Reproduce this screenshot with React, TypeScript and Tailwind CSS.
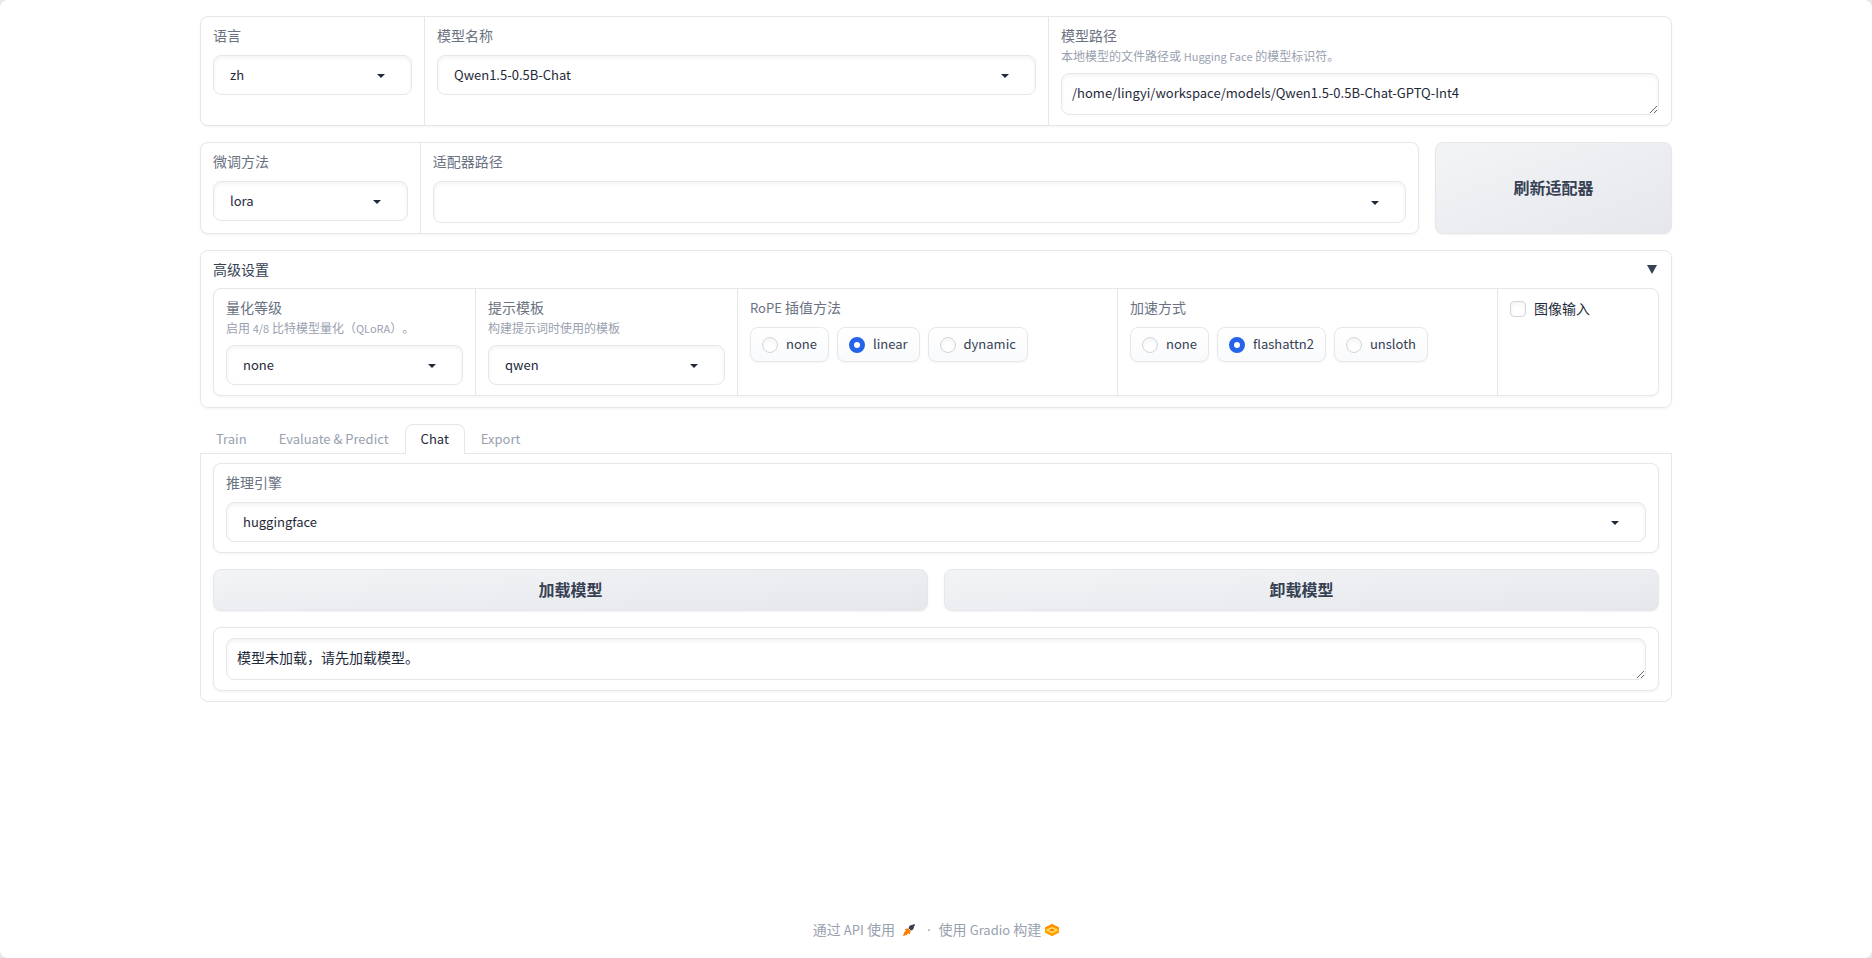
import { useId, useState, type ReactNode } from "react";

const BLOCK = "bg-white px-3 py-[10px]";
const FORM =
  "grid gap-px overflow-hidden rounded-lg border border-gray-200 bg-gray-200 shadow-[0_1px_3px_0_rgba(0,0,0,0.05)]";
const FIELD =
  "block w-full rounded-lg border border-gray-200 bg-white text-gray-800 shadow-[inset_0_2px_4px_0_rgba(0,0,0,0.05)] outline-none";
const TEXTAREA = "h-[42px] resize-y px-[10px]";
const BUTTON =
  "rounded-lg border border-gray-200 bg-linear-to-br from-gray-100 to-gray-200 pb-[2px] text-base font-semibold text-gray-700 shadow-[0_1px_2px_0_rgba(0,0,0,0.05)]";

type LabelProps = { id: string; text: string; info?: ReactNode };

function Label({ id, text, info }: LabelProps) {
  return (
    <label htmlFor={id} className="mb-2 block text-gray-500">
      <span className="block pb-1 leading-4">{text}</span>
      {info && (
        <span className="block h-[18px] py-px text-xs leading-4 text-gray-400">
          {info}
        </span>
      )}
    </label>
  );
}

type DropdownProps = {
  label: string;
  info?: ReactNode;
  options: string[];
  tall?: boolean;
};

function Dropdown({ label, info, options, tall }: DropdownProps) {
  const id = useId();
  return (
    <div className={BLOCK}>
      <Label id={id} text={label} info={info} />
      <div className="relative">
        <select
          id={id}
          className={`${FIELD} appearance-none px-4 text-[13px] ${tall ? "h-[42px]" : "h-10"}`}
        >
          {options.map((o) => (
            <option key={o}>{o}</option>
          ))}
        </select>
        <svg
          viewBox="0 0 18 18"
          className="pointer-events-none absolute inset-y-0 right-[22px] my-auto h-[18px] w-[18px] fill-gray-800"
        >
          <path d="M5 8l4 4 4-4z" />
        </svg>
      </div>
    </div>
  );
}

type RadioGroupProps = {
  label: ReactNode;
  options: string[];
  initial: string;
};

function RadioGroup({ label, options, initial }: RadioGroupProps) {
  const name = useId();
  const [value, setValue] = useState(initial);
  return (
    <fieldset className={BLOCK}>
      <legend className="float-left mb-2 h-5 w-full leading-4 text-gray-500">
        {label}
      </legend>
      <div className="clear-both flex flex-wrap gap-2">
        {options.map((o) => (
          <label
            key={o}
            className="flex h-[35px] items-center gap-2 rounded-lg border border-gray-200 bg-linear-to-b from-white to-gray-50 px-[11px] text-[13px] text-gray-700 shadow-[0_1px_2px_0_rgba(0,0,0,0.05)]"
          >
            <input
              type="radio"
              name={name}
              checked={value === o}
              onChange={() => setValue(o)}
              className="h-4 w-4 appearance-none rounded-full border border-gray-300 bg-white shadow-[inset_0_2px_4px_0_rgba(0,0,0,0.05)] checked:border-[5px] checked:border-[#2563eb] checked:shadow-none"
            />
            <span className="pb-px">{o}</span>
          </label>
        ))}
      </div>
    </fieldset>
  );
}

function Tab({ active, children }: { active?: boolean; children: ReactNode }) {
  return (
    <button
      role="tab"
      aria-selected={!!active}
      className={
        active
          ? "-mb-px h-[30px] rounded-t-lg border border-b-0 border-gray-200 bg-white px-[15px] pb-px text-gray-800"
          : "-mb-px h-[30px] border border-transparent px-[15px] pb-px text-gray-400"
      }
    >
      {children}
    </button>
  );
}

function Rocket() {
  return (
    <svg viewBox="0 0 12 12" className="h-3 w-3">
      <path
        d="M1.600 5.200 5 4.300 7.800 7.200 6.600 10.600 5.200 9.200 3.600 11 0 12l1.200-3.800 1.800-1.400z"
        fill="#ff7c00"
      />
      <path
        d="M5.600 4.200C5.900 2.300 7.400 1 9 1.100L11.200 0 12 .8 10.900 3c.1 1.700-1.200 3.400-3 3.600z"
        fill="#374151"
      />
    </svg>
  );
}

function GradioLogo() {
  return (
    <svg viewBox="0 0 14 12" className="h-3 w-[14px]">
      <path d="M7 0 14 3.500v5L7 12 0 8.500v-5z" fill="#ffb300" />
      <path d="M7 0 14 3.500v1.800L7 2.200 0 5.300V3.500z" fill="#ff8a00" />
      <path d="M0 7.200 7 10.300l7-3.100v1.300L7 12 0 8.500z" fill="#ff9500" />
      <path
        d="M2.200 6 7 3.700 11.800 6 7 8.300z"
        fill="none"
        stroke="#fff0d0"
        strokeWidth="0.800"
      />
      <ellipse cx="7" cy="6" rx="2" ry="1" fill="#ff7c00" />
    </svg>
  );
}

export default function App() {
  const pathId = useId();
  const [path, setPath] = useState(
    "/home/lingyi/workspace/models/Qwen1.5-0.5B-Chat-GPTQ-Int4",
  );

  return (
    <div className="bg-gray-200 font-['Noto_Sans_CJK_SC',sans-serif] text-sm leading-5 text-gray-800 [text-spacing-trim:space-all]">
      <div className="flex min-h-screen flex-col rounded-lg bg-white">
        <main className="mx-auto flex w-full max-w-[1536px] grow flex-col gap-4 px-8 pt-4">
          <div className={`${FORM} grid-cols-[223fr_623fr_622fr]`}>
            <Dropdown label="语言" options={["zh", "en", "ru"]} />
            <Dropdown label="模型名称" options={["Qwen1.5-0.5B-Chat"]} />
            <div className={BLOCK}>
              <Label
                id={pathId}
                text="模型路径"
                info={
                  <>
                    本地模型的文件路径或{" "}
                    <span className="text-[11px]">Hugging Face</span>{" "}
                    的模型标识符。
                  </>
                }
              />
              <textarea
                id={pathId}
                rows={1}
                value={path}
                onChange={(e) => setPath(e.target.value)}
                className={`${FIELD} ${TEXTAREA} pt-[9px] text-[13px]`}
              />
            </div>
          </div>

          <div className="grid grid-cols-[36fr_7fr] gap-4">
            <div className={`${FORM} grid-cols-[9fr_41fr]`}>
              <Dropdown label="微调方法" options={["lora", "freeze", "full"]} />
              <Dropdown label="适配器路径" options={[""]} tall />
            </div>
            <button className={BUTTON}>刷新适配器</button>
          </div>

          <section className="rounded-lg border border-gray-200 px-3 pt-[9px] pb-[11px] shadow-[0_1px_3px_0_rgba(0,0,0,0.05)]">
            <button className="mb-[10px] flex w-full items-center justify-between leading-[18px] text-gray-700">
              <span>高级设置</span>
              <svg
                viewBox="0 0 10 9"
                className="mr-[2px] h-[9px] w-[10px] fill-gray-700"
              >
                <path d="M0 0h10L5 9z" />
              </svg>
            </button>
            <div
              className={`${FORM} grid-cols-[261fr_261fr_379fr_379fr_160fr]`}
            >
              <Dropdown
                label="量化等级"
                info={
                  <>
                    启用 <span className="text-[11px]">4/8</span>{" "}
                    比特模型量化（<span className="text-[11px]">QLoRA</span>）。
                  </>
                }
                options={["none", "8", "4"]}
              />
              <Dropdown
                label="提示模板"
                info="构建提示词时使用的模板"
                options={["qwen", "default"]}
              />
              <RadioGroup
                label={
                  <>
                    <span className="text-[13px]">RoPE</span> 插值方法
                  </>
                }
                options={["none", "linear", "dynamic"]}
                initial="linear"
              />
              <RadioGroup
                label="加速方式"
                options={["none", "flashattn2", "unsloth"]}
                initial="flashattn2"
              />
              <div className={BLOCK}>
                <label className="flex items-center gap-2">
                  <input
                    type="checkbox"
                    className="h-4 w-4 appearance-none rounded-sm border border-gray-300 bg-white shadow-[inset_0_2px_4px_0_rgba(0,0,0,0.05)] checked:bg-[#2563eb]"
                  />
                  <span className="pb-px leading-[18px]">图像输入</span>
                </label>
              </div>
            </div>
          </section>

          <div>
            <div
              role="tablist"
              className="flex border-b border-gray-200 text-[13px]"
            >
              <Tab>Train</Tab>
              <Tab>Evaluate &amp; Predict</Tab>
              <Tab active>Chat</Tab>
              <Tab>Export</Tab>
            </div>
            <div className="flex flex-col gap-4 rounded-b-lg border border-t-0 border-gray-200 px-3 pt-[9px] pb-[10px]">
              <div className={FORM}>
                <Dropdown label="推理引擎" options={["huggingface", "vllm"]} />
              </div>
              <div className="grid grid-cols-2 gap-4">
                <button className={`${BUTTON} h-[42px]`}>加载模型</button>
                <button className={`${BUTTON} h-[42px]`}>卸载模型</button>
              </div>
              <div className={FORM}>
                <div className={BLOCK}>
                  <textarea
                    aria-label="状态"
                    rows={1}
                    readOnly
                    value="模型未加载，请先加载模型。"
                    className={`${FIELD} ${TEXTAREA} pt-2`}
                  />
                </div>
              </div>
            </div>
          </div>
        </main>

        <footer className="flex items-center justify-center pb-[18px] text-gray-400">
          <button className="flex items-center gap-2">
            <span>
              通过 <span className="text-[13px]">API</span> 使用
            </span>
            <Rocket />
          </button>
          <span className="mr-2 ml-3 font-['Open_Sans',sans-serif]">·</span>
          <a href="#gradio" className="flex items-center gap-1">
            <span>
              使用 <span className="text-[13px]">Gradio</span> 构建
            </span>
            <GradioLogo />
          </a>
        </footer>
      </div>
    </div>
  );
}
